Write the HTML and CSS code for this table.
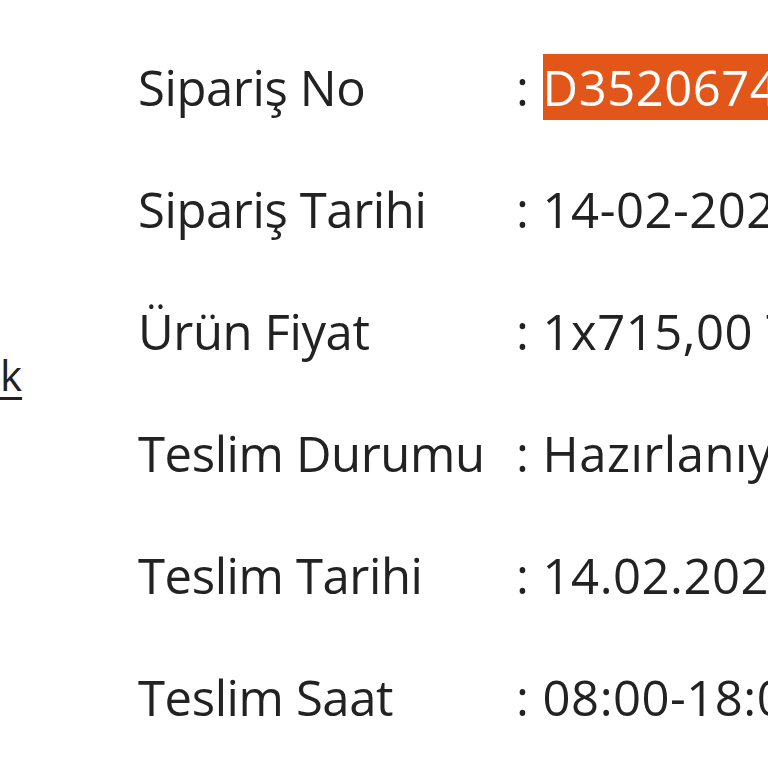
FILE: index.html
```html
<!DOCTYPE html>
<html lang="tr">
<head>
<meta charset="utf-8">
<link rel="stylesheet" href="styles.css">
</head>
<body>
<div class="page">
  <div class="side">
    <a class="back" href="#">k</a>
  </div>
  <div class="details">
    <div class="label">Sipariş No</div>
    <div class="value">: <span class="sel">D3520674</span></div>
    <div class="label">Sipariş Tarihi</div>
    <div class="value">: 14-02-2024</div>
    <div class="label">Ürün Fiyat</div>
    <div class="value">: 1x715,00 TL</div>
    <div class="label">Teslim Durumu</div>
    <div class="value">: Hazırlanıyor</div>
    <div class="label">Teslim Tarihi</div>
    <div class="value">: 14.02.2024</div>
    <div class="label">Teslim Saat</div>
    <div class="value">: 08:00-18:00</div>
  </div>
</div>
</body>
</html>
```
FILE: styles.css
```css
html, body {
  margin: 0;
  padding: 0;
  background: #fff;
  overflow: hidden;
}
body {
  font-family: "Open Sans", "Liberation Sans", sans-serif;
  color: #222;
  width: 768px;
  height: 768px;
}
.page {
  display: flex;
  white-space: nowrap;
  overflow: hidden;
  width: 768px;
}
.side {
  width: 138px;
  flex: none;
  padding-top: 345px;
  font-size: 42px;
  line-height: 60px;
}
.back {
  color: #222;
  text-decoration: underline;
  text-decoration-thickness: 3px;
  text-underline-offset: 6px;
}
.details {
  display: grid;
  grid-template-columns: 378px 1fr;
  grid-auto-rows: 122px;
  padding-top: 26px;
  font-size: 49px;
  line-height: 122px;
  min-width: 0;
}
.label {
  letter-spacing: -0.4px;
}
.value {
  letter-spacing: 0.5px;
  overflow: hidden;
}
.sel {
  background: #e3561a;
  color: #fff;
}
```
